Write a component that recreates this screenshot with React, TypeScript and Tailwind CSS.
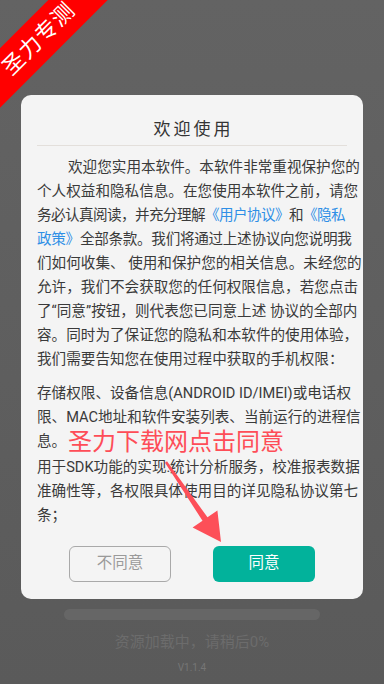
import React from "react";

const font = { fontFamily: 'Roboto, "Noto Sans CJK SC", sans-serif' };

export default function App() {
  const Link = ({ children }: { children: React.ReactNode }) => (
    <span className="text-[#2f8fe6]">{children}</span>
  );
  return (
    <div
      className="relative w-[384px] h-[684px] overflow-hidden bg-gradient-to-b from-[#636363] to-[#5a5a5a] flex flex-col"
      style={font}
    >
      {/* dialog */}
      <div className="mt-[95px] mx-[21px] bg-[#f4f4f4] rounded-[10px] px-[16px] pt-[22px] pb-[17px] flex flex-col">
        <div className="text-center text-[17px] leading-[24px] tracking-[3px] pl-[3px] text-[#333333]">
          欢迎使用
        </div>
        <div className="mt-[4px] h-px bg-[#e3dfdb]" />
        <div className="mt-[9px] text-[14.6px] leading-[24px] text-[#3a3a3a] whitespace-nowrap">
          <div className="pl-[31px]">欢迎您实用本软件。本软件非常重视保护您的</div>
          <div>个人权益和隐私信息。在您使用本软件之前，请您</div>
          <div className="tracking-[-0.6px]">
            务必认真阅读，并充分理解<Link>《用户协议》</Link>和<Link>《隐私</Link>
          </div>
          <div className="tracking-[-0.3px]">
            <Link>政策》</Link>全部条款。我们将通过上述协议向您说明我
          </div>
          <div>们如何收集、 使用和保护您的相关信息。未经您的</div>
          <div>允许，我们不会获取您的任何权限信息，若您点击</div>
          <div>了“同意”按钮，则代表您已同意上述 协议的全部内</div>
          <div>容。同时为了保证您的隐私和本软件的使用体验，</div>
          <div>我们需要告知您在使用过程中获取的手机权限：</div>
          <div className="mt-[10px]">存储权限、设备信息(ANDROID ID/IMEI)或电话权</div>
          <div>限、MAC地址和软件安装列表、当前运行的进程信</div>
          <div>息。</div>
          <div className="mt-[2px]">用于SDK功能的实现:统计分析服务，校准报表数据</div>
          <div>准确性等，各权限具体使用目的详见隐私协议第七</div>
          <div>条；</div>
        </div>
        <div className="mt-[19px] flex justify-center gap-[42px]">
          <div className="w-[102px] h-[36px] rounded-[6px] border-[1.5px] border-[#a9a9a9] flex items-center justify-center text-[15.5px] text-[#9a9a9a]">
            不同意
          </div>
          <div className="w-[102px] h-[36px] rounded-[6px] bg-[#02b29b] flex items-center justify-center text-[15.5px] text-white">
            同意
          </div>
        </div>
      </div>

      {/* loading */}
      <div className="mt-[10px] mx-[64px] h-[11px] rounded-full bg-[#666666]" />
      <div className="mt-[12px] text-center text-[15px] leading-[20px] text-[#6c6c6c]">
        资源加载中，请稍后0%
      </div>
      <div className="mt-[9px] text-center text-[10px] leading-[14px] text-[#767676]">
        V1.1.4
      </div>

      {/* ribbon */}
      <div className="absolute left-[-61px] top-[18px] w-[200px] h-[42px] bg-[#ff0000] -rotate-45 flex items-center justify-center">
        <span className="text-white text-[22px] leading-none tracking-[1px]">圣力专测</span>
      </div>

      {/* annotation */}
      <div className="absolute left-[68px] top-[428px] text-[24px] leading-[28px] text-[#fe4d57]">
        圣力下载网点击同意
      </div>
      <svg className="absolute left-0 top-0" width="384" height="684" viewBox="0 0 384 684">
        <polygon
          fill="#fd4f58"
          points="167,461.3 207.5,517.3 217.4,510.5 221,542 192.6,527.5 202.5,520.7 165,462.7"
        />
      </svg>
    </div>
  );
}
